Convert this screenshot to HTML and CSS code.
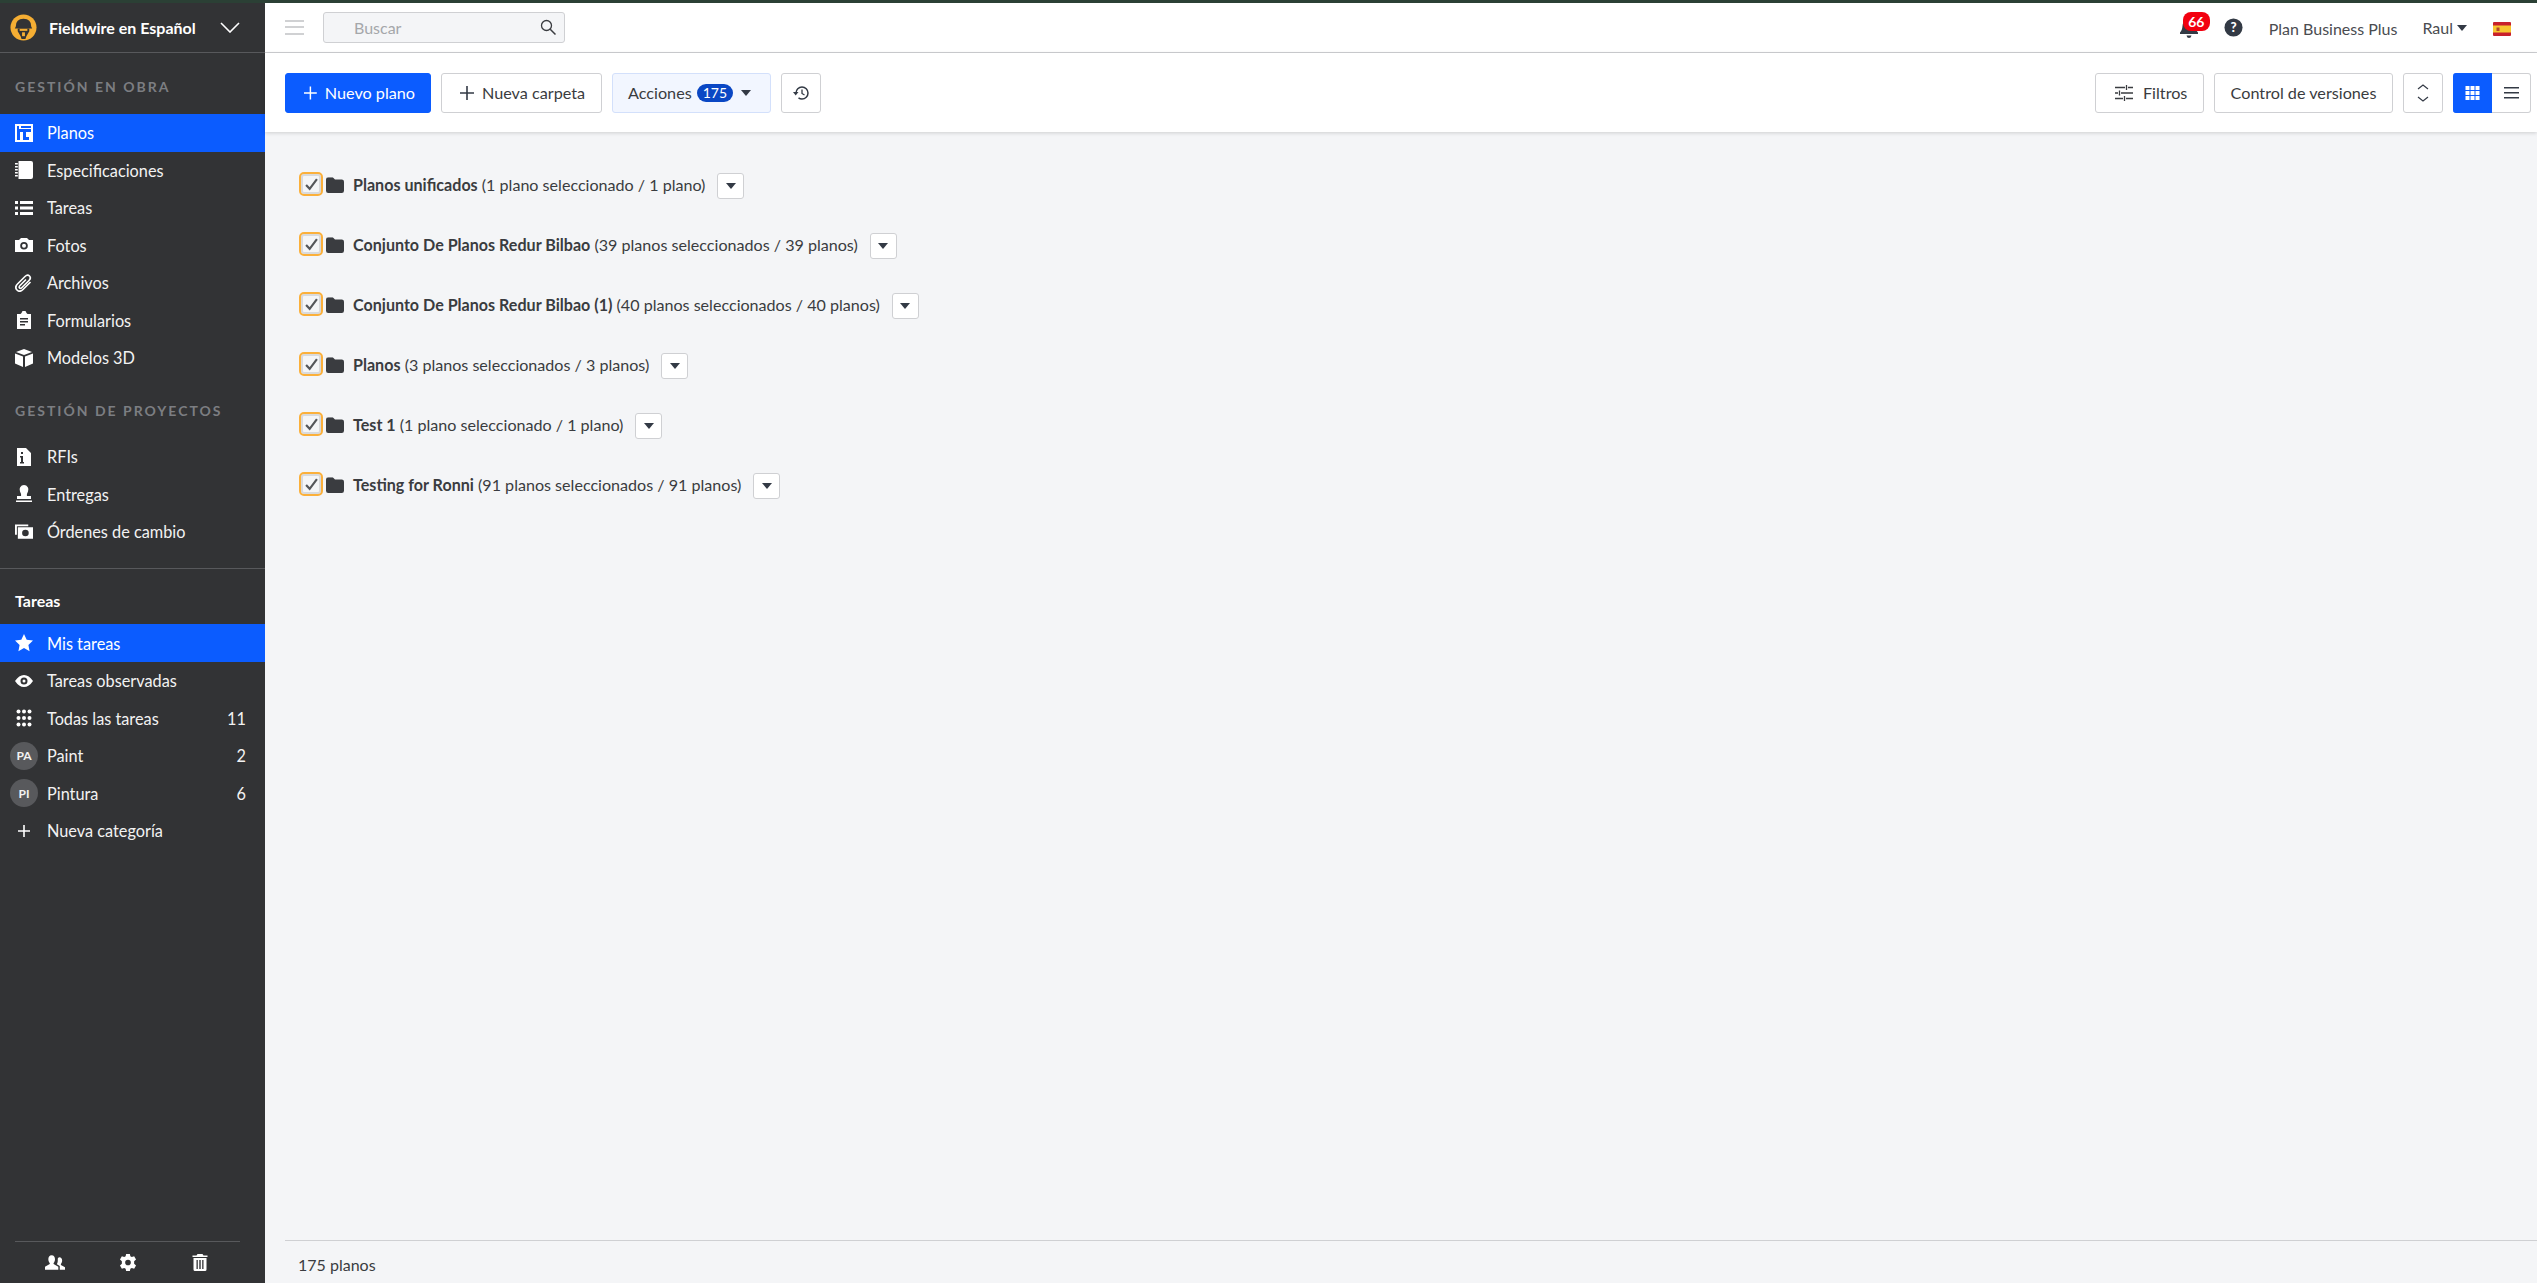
FILE: index.html
```html
<!DOCTYPE html>
<html lang="es">
<head>
    <meta charset="UTF-8">
    <title>Fieldwire - Planos</title>
    <link rel="stylesheet" href="styles.css">
</head>
<body>
<svg class="sprites" width="0" height="0">
    <symbol id="caret" viewBox="0 0 12 7"><path d="M0 0h12L6 7z"/></symbol>
    <symbol id="folder" viewBox="0 0 16 14"><path d="M0 2q0-2 2-2h4l2 2h6q2 0 2 2v8q0 2-2 2H2q-2 0-2-2z"/></symbol>
</svg>
<div class="top-strip"></div>
<div class="app">
    <aside class="sidebar">
        <div class="project">
            <svg class="logo" viewBox="0 0 28 28">
                <circle cx="14" cy="14" r="13.500" fill="#f5ae33"/>
                <path d="M6 13q0-8 8-8t8 8l1 2H5z" fill="#323335"/>
                <path d="M8 15h12v3l-3 5-1 3h-4l-1-3-3-5z" fill="#323335"/>
                <path d="M10 15.500h8v2h-8z" fill="#f5ae33"/>
                <path d="M12.500 19h3v4h-3z" fill="#f5ae33"/>
            </svg>
            <span class="project-name">Fieldwire en Español</span>
            <svg class="chevron" viewBox="0 0 20 11"><path d="M1 1l9 9 9-9" fill="none" stroke="#fff" stroke-width="1.600"/></svg>
        </div>

        <div class="nav-label first">GESTIÓN EN OBRA</div>
        <a class="nav-item active">
            <span class="nav-icon"><svg viewBox="0 0 18 18"><path fill-rule="evenodd" d="M0 0h18v18H0zM2 2v14h3V8h3v8h6v-3h-3V8h5V5H4V2zM6 3v1h10V2H6z"/></svg></span>
            Planos
        </a>
        <a class="nav-item">
            <span class="nav-icon"><svg viewBox="0 0 18 18"><path d="M3.500 0H16q2 0 2 2v14q0 2-2 2H3.500zM0 2h2.800v1.400H0zM0 5h2.800v1.400H0zM0 8h2.800v1.400H0zM0 11h2.800v1.400H0zM0 14h2.800v1.400H0z"/></svg></span>
            Especificaciones
        </a>
        <a class="nav-item">
            <span class="nav-icon"><svg viewBox="0 0 18 18"><path d="M0 2h3v3H0zM5 2h13v3H5zM0 7.500h3v3H0zM5 7.500h13v3H5zM0 13h3v3H0zM5 13h13v3H5z"/></svg></span>
            Tareas
        </a>
        <a class="nav-item">
            <span class="nav-icon"><svg viewBox="0 0 18 18"><path fill-rule="evenodd" d="M0 4h4l2-2h6l2 2h4v12H0zM9 6a3.800 3.800 0 100 7.600A3.800 3.800 0 009 6zm0 1.800a2 2 0 110 4 2 2 0 010-4z"/></svg></span>
            Fotos
        </a>
        <a class="nav-item">
            <span class="nav-icon"><svg viewBox="0 0 18 18"><path class="clip" d="M15.500 8L8 15.500c-2 2-4.500 2-6 .5s-1.500-4 .5-6L10 2.500c1.500-1.500 3.500-1.500 4.500-.5s1 3-.5 4.500L7 13.500c-1 1-2 1-2.500.5s-.5-1.500.5-2.500L11 5.500"/></svg></span>
            Archivos
        </a>
        <a class="nav-item">
            <span class="nav-icon"><svg viewBox="0 0 18 18"><path fill-rule="evenodd" d="M2 3h3.500l1-1 1-2h3l1 2 1 1H16v15H2zM5 7v1.400h8V7zm0 3v1.400h8V10zm0 3v1.400h5V13z"/></svg></span>
            Formularios
        </a>
        <a class="nav-item">
            <span class="nav-icon"><svg viewBox="0 0 18 18"><path d="M9 0l8 3-8 3-8-3zM0 4.500l8 3V18l-8-3.500zM18 4.500l-8 3V18l8-3.500z"/></svg></span>
            Modelos 3D
        </a>

        <div class="nav-label">GESTIÓN DE PROYECTOS</div>
        <a class="nav-item">
            <span class="nav-icon"><svg viewBox="0 0 18 18"><path fill-rule="evenodd" d="M2 0h9l5 5v13H2zM6 4v2h2V4zM5 8v1.500h1V14H5v1.500h4V14H8V8z"/></svg></span>
            RFIs
        </a>
        <a class="nav-item">
            <span class="nav-icon"><svg viewBox="0 0 18 18"><path d="M9 0a4.500 4.500 0 014 6.500c-.7 1.500-1.500 3-1 4.500h4v3H2v-3h4c.5-1.500-.3-3-1-4.500A4.500 4.500 0 019 0zM1 15.500h16V17H1z"/></svg></span>
            Entregas
        </a>
        <a class="nav-item">
            <span class="nav-icon"><svg viewBox="0 0 19 18"><path d="M0 1h14v2H2v9H0z"/><path fill-rule="evenodd" d="M3 4h16v12H3zM11 6.500a3.500 3.500 0 100 7 3.500 3.500 0 000-7z"/></svg></span>
            Órdenes de cambio
        </a>

        <div class="nav-divider"></div>
        <div class="nav-heading">Tareas</div>
        <a class="nav-item active">
            <span class="nav-icon"><svg viewBox="0 0 18 18"><path d="M9 0l2.700 5.800 6.300.8-4.600 4.300 1.200 6.300L9 14.100l-5.600 3.100 1.200-6.300L0 6.600l6.300-.8z"/></svg></span>
            Mis tareas
        </a>
        <a class="nav-item">
            <span class="nav-icon"><svg viewBox="0 0 18 18"><path fill-rule="evenodd" d="M0 9q4-6 9-6t9 6q-4 6-9 6t-9-6zm9-3.500a3.500 3.500 0 100 7 3.500 3.500 0 000-7zM9 7.500a1.500 1.500 0 110 3 1.500 1.500 0 010-3z"/></svg></span>
            Tareas observadas
        </a>
        <a class="nav-item">
            <span class="nav-icon"><svg viewBox="0 0 18 18"><circle cx="3.500" cy="2.500" r="2"/><circle cx="9" cy="2.500" r="2"/><circle cx="14.500" cy="2.500" r="2"/><circle cx="3.500" cy="9" r="2"/><circle cx="9" cy="9" r="2"/><circle cx="14.500" cy="9" r="2"/><circle cx="3.500" cy="15.500" r="2"/><circle cx="9" cy="15.500" r="2"/><circle cx="14.500" cy="15.500" r="2"/></svg></span>
            Todas las tareas
            <span class="nav-count">11</span>
        </a>
        <a class="nav-item">
            <span class="avatar">PA</span>
            Paint
            <span class="nav-count">2</span>
        </a>
        <a class="nav-item">
            <span class="avatar">PI</span>
            Pintura
            <span class="nav-count">6</span>
        </a>
        <a class="nav-item">
            <span class="nav-icon"><svg viewBox="0 0 18 18"><path d="M8.200 3h1.600v5.200H15v1.600H9.800V15H8.200V9.800H3V8.200h5.200z"/></svg></span>
            Nueva categoría
        </a>

        <div class="sidebar-footer">
            <svg viewBox="0 0 21 15"><path d="M7 0c2.400 0 3.500 2 3.500 4 0 1.800-.8 3.300-1.500 4v1l5 3v3H0v-3l5-3V8C4.300 7.300 3.500 5.800 3.500 4 3.500 2 4.600 0 7 0zM15 2c2 0 3 1.700 3 3.500 0 1.500-.6 2.800-1.300 3.500v1l4.300 2.500V15h-5.500v-3.800l-3-1.800V9c.9-1.200 1-3 .9-4.600C13.300 3 14 2 15 2z"/></svg>
            <svg viewBox="0 0 18 18"><path fill-rule="evenodd" d="M7 0h4l.5 2.500 1.500.8L15.500 2.500l2 3.400-2 1.700v2.800l2 1.700-2 3.400-2.500-.8-1.500.8L11 18H7l-.5-2.500-1.500-.8-2.500.8-2-3.400 2-1.700V7.600l-2-1.700 2-3.400 2.500.8 1.500-.8zM9 6a3 3 0 100 6 3 3 0 000-6z"/></svg>
            <svg viewBox="0 0 15 17"><path fill-rule="evenodd" d="M5 0h5l1 1.500h4V3H0V1.500h4zM1 4h13v11.500q0 1.500-1.500 1.500h-10Q1 17 1 15.500zM4 6v9h1.300V6zm2.800 0v9h1.400V6zm2.900 0v9H11V6z"/></svg>
        </div>
    </aside>

    <div class="main">
        <header class="topbar">
            <div class="burger"><span></span><span></span><span></span></div>
            <div class="search">
                <span class="search-text">Buscar</span>
                <svg viewBox="0 0 16 16"><circle cx="6.500" cy="6.500" r="5" fill="none" stroke="#3a3c40" stroke-width="1.300"/><path d="M10.200 10.200L15.500 15.500" stroke="#3a3c40" stroke-width="1.500"/></svg>
            </div>
            <div class="topbar-right">
                <div class="bell">
                    <svg viewBox="0 0 18 22"><path d="M9 2q6 0 6.500 7c.2 3 1 5 2.500 6.500V17H0v-1.500C1.500 14 2.300 12 2.500 9 3 4 6 2 9 2zM6.500 18.500h5Q11 21 9 21t-2.500-2.500z"/></svg>
                    <span class="badge">66</span>
                </div>
                <svg class="help" viewBox="0 0 20 20"><circle cx="10" cy="10" r="9.500" fill="#333a45"/><text x="10" y="14.800" text-anchor="middle" class="help-mark">?</text></svg>
                <span class="plan">Plan Business Plus</span>
                <span class="user">Raul <svg class="caret" viewBox="0 0 12 7"><use href="#caret"/></svg></span>
                <svg class="flag" viewBox="0 0 18 14"><rect width="18" height="14" rx="1" fill="#c8202c"/><rect y="3.500" width="18" height="7" fill="#f7c531"/><rect x="3.500" y="5.500" width="3" height="3.500" fill="#b5472a"/></svg>
            </div>
        </header>

        <div class="toolbar">
            <button class="btn primary"><svg class="plus" viewBox="0 0 14 14"><path d="M6.200 0h1.600v6.200H14v1.600H7.800V14H6.200V7.800H0V6.200h6.200z"/></svg>Nuevo plano</button>
            <button class="btn folder-btn"><svg class="plus" viewBox="0 0 14 14"><path d="M6.200 0h1.600v6.200H14v1.600H7.800V14H6.200V7.800H0V6.200h6.200z"/></svg>Nueva carpeta</button>
            <button class="btn actions">Acciones <span class="count">175</span><svg class="caret" viewBox="0 0 12 7"><use href="#caret"/></svg></button>
            <button class="btn square">
                <svg viewBox="0 0 16 16" class="history"><path d="M3 8a6 6 0 116 6 6 6 0 01-3.500-1.100" fill="none" stroke="#333a45" stroke-width="1.500"/><path d="M0 7h5.500L2.700 10.500z" fill="#333a45"/><path d="M9 4.500V8.500l2.500 1.500" fill="none" stroke="#333a45" stroke-width="1.300"/></svg>
            </button>
            <div class="toolbar-right">
                <button class="btn filters">
                    <svg viewBox="0 0 18 16" class="sliders"><path d="M0 2.500h10M13 2.500h5M0 8h3M6 8h12M0 13.500h8M11 13.500h7M11.500 0v5M4.500 5.500v5M9.500 11v5" fill="none" stroke="#3a3c40" stroke-width="1.300"/></svg>
                    Filtros
                </button>
                <button class="btn versions">Control de versiones</button>
                <button class="btn square expand">
                    <svg viewBox="0 0 12 18"><path d="M1 5l5-4 5 4M1 13l5 4 5-4" fill="none" stroke="#333a45" stroke-width="1.200"/></svg>
                </button>
                <div class="view-toggle">
                    <button class="btn view on"><svg viewBox="0 0 14 14" fill="#fff"><path d="M0 0h4v4H0zM5 0h4v4H5zM10 0h4v4h-4zM0 5h4v4H0zM5 5h4v4H5zM10 5h4v4h-4zM0 10h4v4H0zM5 10h4v4H5zM10 10h4v4h-4z"/></svg></button>
                    <button class="btn view"><svg viewBox="0 0 15 12" fill="#333a45"><path d="M0 0h15v1.500H0zM0 5h15v1.500H0zM0 10h15v1.500H0z"/></svg></button>
                </div>
            </div>
        </div>

        <div class="folders">
            <div class="folder-row">
                <span class="check"><svg viewBox="0 0 12 12"><path d="M1 6.500l3.300 3.500L11 1" fill="none" stroke="#55575a" stroke-width="2"/></svg></span>
                <svg class="folder-icon" viewBox="0 0 16 14"><use href="#folder"/></svg>
                <span class="folder-text"><b>Planos unificados</b> (1 plano seleccionado / 1 plano)</span>
                <button class="more"><svg class="caret" viewBox="0 0 12 7"><use href="#caret"/></svg></button>
            </div>
            <div class="folder-row">
                <span class="check"><svg viewBox="0 0 12 12"><path d="M1 6.500l3.300 3.500L11 1" fill="none" stroke="#55575a" stroke-width="2"/></svg></span>
                <svg class="folder-icon" viewBox="0 0 16 14"><use href="#folder"/></svg>
                <span class="folder-text"><b>Conjunto De Planos Redur Bilbao</b> (39 planos seleccionados / 39 planos)</span>
                <button class="more"><svg class="caret" viewBox="0 0 12 7"><use href="#caret"/></svg></button>
            </div>
            <div class="folder-row">
                <span class="check"><svg viewBox="0 0 12 12"><path d="M1 6.500l3.300 3.500L11 1" fill="none" stroke="#55575a" stroke-width="2"/></svg></span>
                <svg class="folder-icon" viewBox="0 0 16 14"><use href="#folder"/></svg>
                <span class="folder-text"><b>Conjunto De Planos Redur Bilbao (1)</b> (40 planos seleccionados / 40 planos)</span>
                <button class="more"><svg class="caret" viewBox="0 0 12 7"><use href="#caret"/></svg></button>
            </div>
            <div class="folder-row">
                <span class="check"><svg viewBox="0 0 12 12"><path d="M1 6.500l3.300 3.500L11 1" fill="none" stroke="#55575a" stroke-width="2"/></svg></span>
                <svg class="folder-icon" viewBox="0 0 16 14"><use href="#folder"/></svg>
                <span class="folder-text"><b>Planos</b> (3 planos seleccionados / 3 planos)</span>
                <button class="more"><svg class="caret" viewBox="0 0 12 7"><use href="#caret"/></svg></button>
            </div>
            <div class="folder-row">
                <span class="check"><svg viewBox="0 0 12 12"><path d="M1 6.500l3.300 3.500L11 1" fill="none" stroke="#55575a" stroke-width="2"/></svg></span>
                <svg class="folder-icon" viewBox="0 0 16 14"><use href="#folder"/></svg>
                <span class="folder-text"><b>Test 1</b> (1 plano seleccionado / 1 plano)</span>
                <button class="more"><svg class="caret" viewBox="0 0 12 7"><use href="#caret"/></svg></button>
            </div>
            <div class="folder-row">
                <span class="check"><svg viewBox="0 0 12 12"><path d="M1 6.500l3.300 3.500L11 1" fill="none" stroke="#55575a" stroke-width="2"/></svg></span>
                <svg class="folder-icon" viewBox="0 0 16 14"><use href="#folder"/></svg>
                <span class="folder-text"><b>Testing for Ronni</b> (91 planos seleccionados / 91 planos)</span>
                <button class="more"><svg class="caret" viewBox="0 0 12 7"><use href="#caret"/></svg></button>
            </div>
        </div>

        <footer class="status"><span>175 planos</span></footer>
    </div>
</div>
</body>
</html>
```

FILE: styles.css
```css
* {
    box-sizing: border-box;
}
html, body {
    height: 100%;
}
body {
    margin: 0;
    font-family: Lato, "Open Sans", sans-serif;
    font-size: 16px;
    color: #3a3c40;
    background: #f4f5f7;
    overflow: hidden;
}
.sprites {
    position: absolute;
}
.top-strip {
    height: 3px;
    background: #2b4035;
}
.app {
    display: flex;
    height: 1280px;
}

/* sidebar */
.sidebar {
    width: 265px;
    flex: none;
    background: #323335;
    color: #fff;
    display: flex;
    flex-direction: column;
}
.project {
    height: 50px;
    flex: none;
    display: flex;
    align-items: center;
    padding: 0 25px 0 10px;
    border-bottom: 1px solid #58595c;
}
.logo {
    width: 27px;
    height: 27px;
    margin-right: 12px;
}
.project-name {
    font-weight: 700;
    font-size: 16px;
    flex: 1;
}
.chevron {
    width: 20px;
    height: 11px;
}
.nav-label {
    height: 16px;
    line-height: 16px;
    margin: 26px 0 19.4px 15px;
    font-size: 14px;
    font-weight: 700;
    letter-spacing: 2px;
    color: #7c7e82;
}
.nav-label.first {
    margin-bottom: 19px;
}
.nav-item {
    height: 37.5px;
    flex: none;
    display: flex;
    align-items: center;
    padding-right: 19px;
    font-size: 16.3px;
    color: #f2f2f2;
}
.nav-item.active {
    background: #0b5cff;
    color: #fff;
}
.nav-icon {
    width: 18px;
    margin: 0 14px 0 15px;
    display: flex;
}
.nav-icon svg {
    width: 18px;
    height: 18px;
    fill: #fff;
}
.nav-icon .clip {
    fill: none;
    stroke: #fff;
    stroke-width: 1.6;
}
.nav-count {
    margin-left: auto;
}
.avatar {
    width: 28px;
    height: 28px;
    margin: 0 9px 0 10px;
    border-radius: 50%;
    background: #58595c;
    font-size: 12px;
    font-weight: 700;
    display: flex;
    align-items: center;
    justify-content: center;
}
.nav-divider {
    height: 1px;
    margin-top: 18px;
    background: #58595c;
}
.nav-heading {
    margin: 21px 0 13px 15px;
    height: 21px;
    line-height: 21px;
    font-weight: 700;
    font-size: 16px;
}
.sidebar-footer {
    margin: auto 25px 0 15px;
    height: 42px;
    border-top: 1px solid #58595c;
    display: flex;
    align-items: center;
    justify-content: space-between;
    padding: 0 30px;
}
.sidebar-footer svg {
    width: 20px;
    height: 17px;
    fill: #fff;
}

/* main column */
.main {
    flex: 1;
    display: flex;
    flex-direction: column;
    min-width: 0;
}
.topbar {
    height: 50px;
    flex: none;
    background: #fff;
    border-bottom: 1px solid #cfd0d3;
    display: flex;
    align-items: center;
    padding: 0 26px 1px 20px;
}
.burger {
    width: 19px;
    margin-right: 19px;
    display: flex;
    flex-direction: column;
    gap: 4.5px;
}
.burger span {
    height: 2px;
    background: #d0d1d3;
}
.search {
    width: 242px;
    height: 31px;
    background: #f4f5f7;
    border: 1px solid #cfd0d3;
    border-radius: 3px;
    display: flex;
    align-items: center;
    justify-content: space-between;
    padding: 0 8px 0 30px;
}
.search-text {
    color: #a5a7aa;
}
.search svg {
    width: 16px;
    height: 16px;
}
.topbar-right {
    margin-left: auto;
    display: flex;
    align-items: center;
}
.bell {
    position: relative;
    width: 18px;
    height: 22px;
    margin: 2px 26px 0 0;
}
.bell svg {
    width: 18px;
    height: 22px;
    fill: #333a45;
}
.badge {
    position: absolute;
    left: 3px;
    top: -5px;
    min-width: 27px;
    height: 19px;
    line-height: 19px;
    text-align: center;
    background: #f2000f;
    color: #fff;
    border-radius: 8px;
    font-size: 14px;
    font-weight: 700;
}
.help {
    width: 19px;
    height: 19px;
    margin-right: 26px;
}
.help-mark {
    font-family: Lato, sans-serif;
    font-size: 14px;
    font-weight: 900;
    fill: #fff;
}
.plan {
    color: #4a4c50;
    margin: 3px 25px 0 0;
}
.user {
    color: #4a4c50;
    margin: 1px 26px 0 0;
    display: flex;
    align-items: center;
    gap: 4px;
}
.caret {
    width: 10px;
    height: 6px;
    fill: #333a45;
}
.flag {
    width: 18px;
    height: 14px;
    margin-top: 3px;
}

/* toolbar */
.toolbar {
    height: 79px;
    flex: none;
    background: #fff;
    box-shadow: 0 1px 4px rgba(0,0,0,0.16);
    display: flex;
    align-items: center;
    gap: 10px;
    padding: 0 6px 0 20px;
    position: relative;
}
.toolbar-right {
    margin-left: auto;
    display: flex;
    gap: 10px;
}
.btn {
    height: 40px;
    font: 16.2px Lato, sans-serif;
    color: #3a3c40;
    background: #fff;
    border: 1px solid #cfd0d3;
    border-radius: 3px;
    padding: 0 15px;
    display: flex;
    align-items: center;
    white-space: nowrap;
}
.btn.primary {
    width: 146px;
    padding-left: 18px;
    background: #0b5cff;
    border-color: #0b5cff;
    color: #fff;
}
.btn.primary .plus {
    fill: #fff;
}
.btn.folder-btn {
    width: 161px;
    padding-left: 18px;
}
.plus {
    width: 14px;
    height: 14px;
    margin-right: 8px;
    fill: #333a45;
}
.btn.actions {
    width: 159px;
    background: #f2f6ff;
    border-color: #d3e0fb;
}
.count {
    background: #0a47c4;
    color: #fff;
    border-radius: 9px;
    font-size: 14px;
    line-height: 18px;
    padding: 0 6px;
    margin: 0 8px 0 5px;
}
.btn.square {
    width: 40px;
    padding: 0;
    justify-content: center;
}
.history {
    width: 16px;
    height: 16px;
}
.btn.filters {
    width: 109px;
    padding-left: 19px;
}
.btn.versions {
    width: 179px;
    justify-content: center;
}
.sliders {
    width: 18px;
    height: 16px;
    margin-right: 10px;
}
.expand svg {
    width: 12px;
    height: 18px;
}
.view-toggle {
    display: flex;
}
.btn.view {
    width: 39px;
    padding: 0;
    justify-content: center;
    border-radius: 0 3px 3px 0;
    border-left: 0;
}
.btn.view.on {
    background: #0b5cff;
    border-color: #0b5cff;
    border-radius: 3px 0 0 3px;
}
.btn.view svg {
    width: 15px;
    height: 14px;
}

/* folder list */
.folders {
    flex: 1;
    padding: 40px 0 0 34px;
}
.folder-row {
    height: 60px;
    display: flex;
    align-items: flex-start;
}
.check {
    width: 24px;
    height: 24px;
    background: #f4f5f7;
    border: 2px solid #fbb03b;
    border-radius: 5px;
    box-shadow: inset 0 0 0 2px #d9dadc;
    display: flex;
    align-items: center;
    justify-content: center;
}
.check svg {
    width: 13px;
    height: 13px;
}
.folder-icon {
    width: 18px;
    height: 16px;
    margin: 5px 0 0 3px;
    fill: #3a3c40;
}
.folder-text {
    margin: 1px 0 0 9px;
    line-height: 24px;
    font-size: 16.1px;
}
.folder-text b {
    font-weight: 700;
}
.more {
    width: 27px;
    height: 26px;
    margin: 1px 0 0 12px;
    padding: 0;
    background: #fff;
    border: 1px solid #cfd0d3;
    border-radius: 3px;
    display: flex;
    align-items: center;
    justify-content: center;
}
.status {
    height: 43px;
    flex: none;
    margin-left: 20px;
    border-top: 1px solid #cfd0d3;
    padding: 5px 0 0 13px;
    display: flex;
    align-items: center;
}
```
